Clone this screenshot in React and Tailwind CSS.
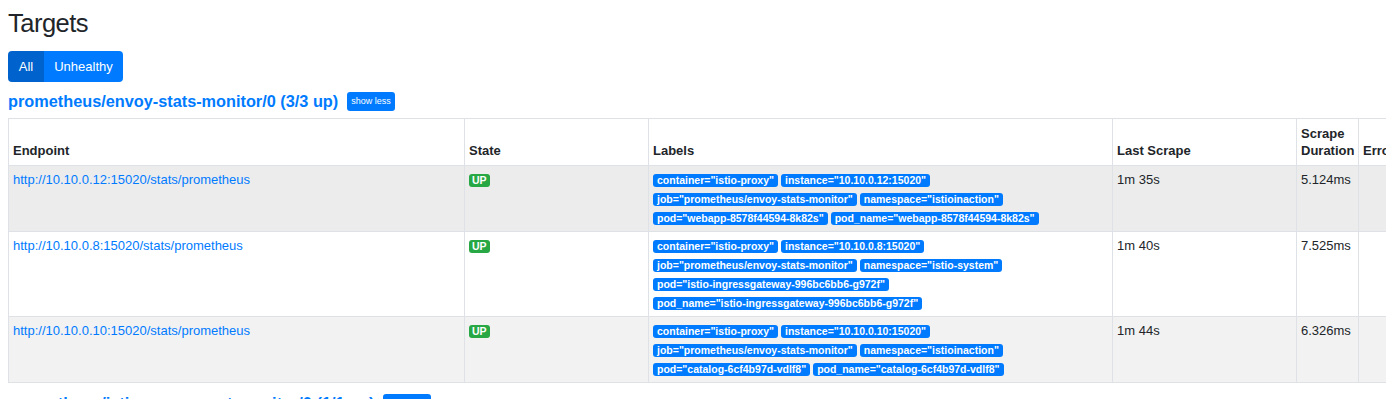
import React from 'react'

const pools = [
  {
    name: 'prometheus/envoy-stats-monitor/0',
    up: '3/3 up',
    targets: [
      {
        endpoint: 'http://10.10.0.12:15020/stats/prometheus',
        labels: [
          'container="istio-proxy"',
          'instance="10.10.0.12:15020"',
          'job="prometheus/envoy-stats-monitor"',
          'namespace="istioinaction"',
          'pod="webapp-8578f44594-8k82s"',
          'pod_name="webapp-8578f44594-8k82s"',
        ],
        last: '1m 35s',
        duration: '5.124ms',
        bg: 'bg-[#ececec]',
      },
      {
        endpoint: 'http://10.10.0.8:15020/stats/prometheus',
        labels: [
          'container="istio-proxy"',
          'instance="10.10.0.8:15020"',
          'job="prometheus/envoy-stats-monitor"',
          'namespace="istio-system"',
          'pod="istio-ingressgateway-996bc6bb6-g972f"',
          'pod_name="istio-ingressgateway-996bc6bb6-g972f"',
        ],
        last: '1m 40s',
        duration: '7.525ms',
        bg: 'bg-white',
      },
      {
        endpoint: 'http://10.10.0.10:15020/stats/prometheus',
        labels: [
          'container="istio-proxy"',
          'instance="10.10.0.10:15020"',
          'job="prometheus/envoy-stats-monitor"',
          'namespace="istioinaction"',
          'pod="catalog-6cf4b97d-vdlf8"',
          'pod_name="catalog-6cf4b97d-vdlf8"',
        ],
        last: '1m 44s',
        duration: '6.326ms',
        bg: 'bg-[#f2f2f2]',
      },
    ],
  },
]

const PoolHeader = ({ name, up }) => (
  <div className="flex items-center h-[24px]">
    <a href="#" className="text-[16.3px] font-bold text-[#007bff] leading-[24px]">
      {name} ({up})
    </a>
    <button className="ml-[9px] h-[19px] px-[4px] rounded-[3px] bg-[#007bff] text-white text-[9px] leading-none">
      show less
    </button>
  </div>
)

const th = 'border border-[#dee2e6] px-[4px] pt-[6px] pb-[6px] text-left align-bottom font-bold leading-[17px]'
const td = 'border border-[#dee2e6] px-[4px] py-[4px] align-top leading-[19px]'

const App = () => {
  return (
    <div className="w-full h-[399px] overflow-hidden bg-white text-[#212529] text-[13px] font-['Liberation_Sans',Arial,sans-serif]">
      <div className="pl-[8px] w-[1430px]">
        <h2 className="mt-[5px] text-[25.5px] leading-[36px] tracking-[-0.5px] font-normal">Targets</h2>

        <div className="mt-[10px] flex h-[31px] w-fit rounded-[4px] overflow-hidden text-white text-[13px]">
          <button className="w-[36px] bg-[#0062cc]">All</button>
          <button className="w-[79px] bg-[#007bff]">Unhealthy</button>
        </div>

        {pools.map((pool) => (
          <div key={pool.name} className="mt-[7px]">
            <PoolHeader name={pool.name} up={pool.up} />
            <table className="mt-[5px] w-[1410px] table-fixed border-collapse">
              <colgroup>
                <col className="w-[456px]" />
                <col className="w-[184px]" />
                <col className="w-[464px]" />
                <col className="w-[184px]" />
                <col className="w-[62px]" />
                <col className="w-[60px]" />
              </colgroup>
              <thead>
                <tr className="bg-white">
                  <th className={th}>Endpoint</th>
                  <th className={th}>State</th>
                  <th className={th}>Labels</th>
                  <th className={th}>Last Scrape</th>
                  <th className={`${th} pr-[2px]`}>Scrape Duration</th>
                  <th className={th}>Error</th>
                </tr>
              </thead>
              <tbody>
                {pool.targets.map((t) => (
                  <tr key={t.endpoint} className={t.bg}>
                    <td className={td}>
                      <a href="#" className="text-[#007bff]">{t.endpoint}</a>
                    </td>
                    <td className={td}>
                      <span className="inline-block rounded-[3px] bg-[#28a745] text-white font-bold text-[10.5px] leading-none px-[3px] py-[1.5px]">
                        UP
                      </span>
                    </td>
                    <td className={td}>
                      {t.labels.map((l) => (
                        <span key={l} className="inline-block mr-[3px] rounded-[3px] bg-[#007bff] text-white font-bold text-[10.5px] leading-none px-[4px] py-[1.5px]">
                          {l}
                        </span>
                      ))}
                    </td>
                    <td className={td}>{t.last}</td>
                    <td className={td}>{t.duration}</td>
                    <td className={td}></td>
                  </tr>
                ))}
              </tbody>
            </table>
          </div>
        ))}

        <div className="mt-[8px]">
          <PoolHeader name="prometheus/istio-component-monitor/0" up="1/1 up" />
        </div>
      </div>
    </div>
  )
}

export default App
